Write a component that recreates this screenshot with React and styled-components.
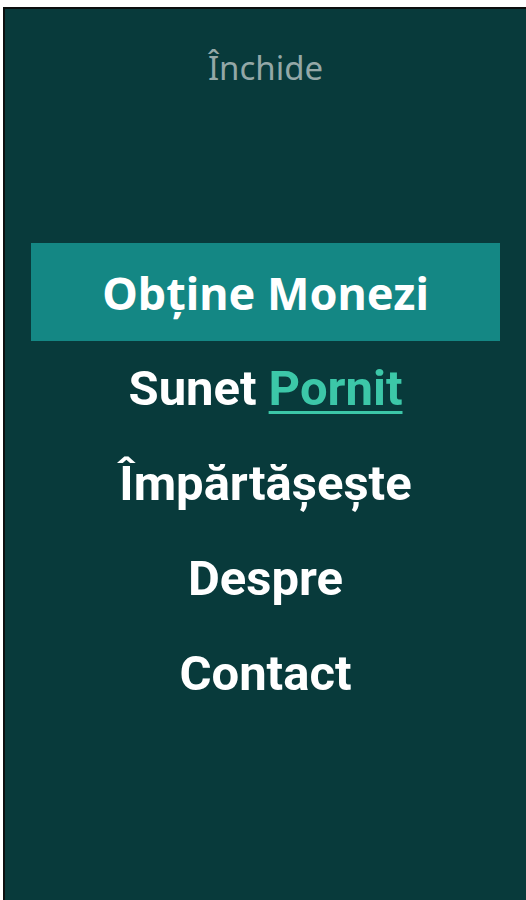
import React from 'react';
import styled, { createGlobalStyle } from 'styled-components';

const GlobalStyle = createGlobalStyle`
  html, body {
    margin: 0;
    padding: 0;
    background: #ffffff;
  }
`;

const Panel = styled.div`
  margin: 7px 0 0 3px;
  min-height: 893px;
  box-sizing: border-box;
  border-top: 2px solid #0b0f0f;
  border-left: 2px solid #0b0f0f;
  background-color: #083a3b;
  padding: 39px 26px 0 26px;
  display: flex;
  flex-direction: column;
  align-items: stretch;
`;

const CloseButton = styled.div`
  font-family: 'Noto Sans', 'Open Sans', sans-serif;
  font-size: 33px;
  line-height: 40px;
  color: #94a8a7;
  text-align: center;
`;

const Menu = styled.ul`
  list-style: none;
  margin: 155px 0 0 0;
  padding: 0;
  display: flex;
  flex-direction: column;
`;

const Item = styled.li`
  height: ${(props) => (props.active ? '98px' : '95px')};
  display: flex;
  align-items: center;
  justify-content: center;
  background-color: ${(props) => (props.active ? '#148784' : 'transparent')};
  color: #ffffff;
  font-family: ${(props) =>
    props.active ? "'Noto Sans', 'Open Sans', sans-serif" : 'Roboto, sans-serif'};
  font-weight: 700;
  font-size: ${(props) => (props.active ? '45px' : '49px')};
  white-space: nowrap;
`;

const Toggle = styled.span`
  color: #3cc7a8;
  text-decoration: underline;
  text-decoration-thickness: 3px;
  text-underline-offset: 6px;
  margin-left: 12px;
`;

export default function App() {
  return (
    <>
      <GlobalStyle />
      <Panel>
        <CloseButton>Închide</CloseButton>
        <Menu>
          <Item active>Obține Monezi</Item>
          <Item>
            Sunet<Toggle>Pornit</Toggle>
          </Item>
          <Item>Împărtășește</Item>
          <Item>Despre</Item>
          <Item>Contact</Item>
        </Menu>
      </Panel>
    </>
  );
}
